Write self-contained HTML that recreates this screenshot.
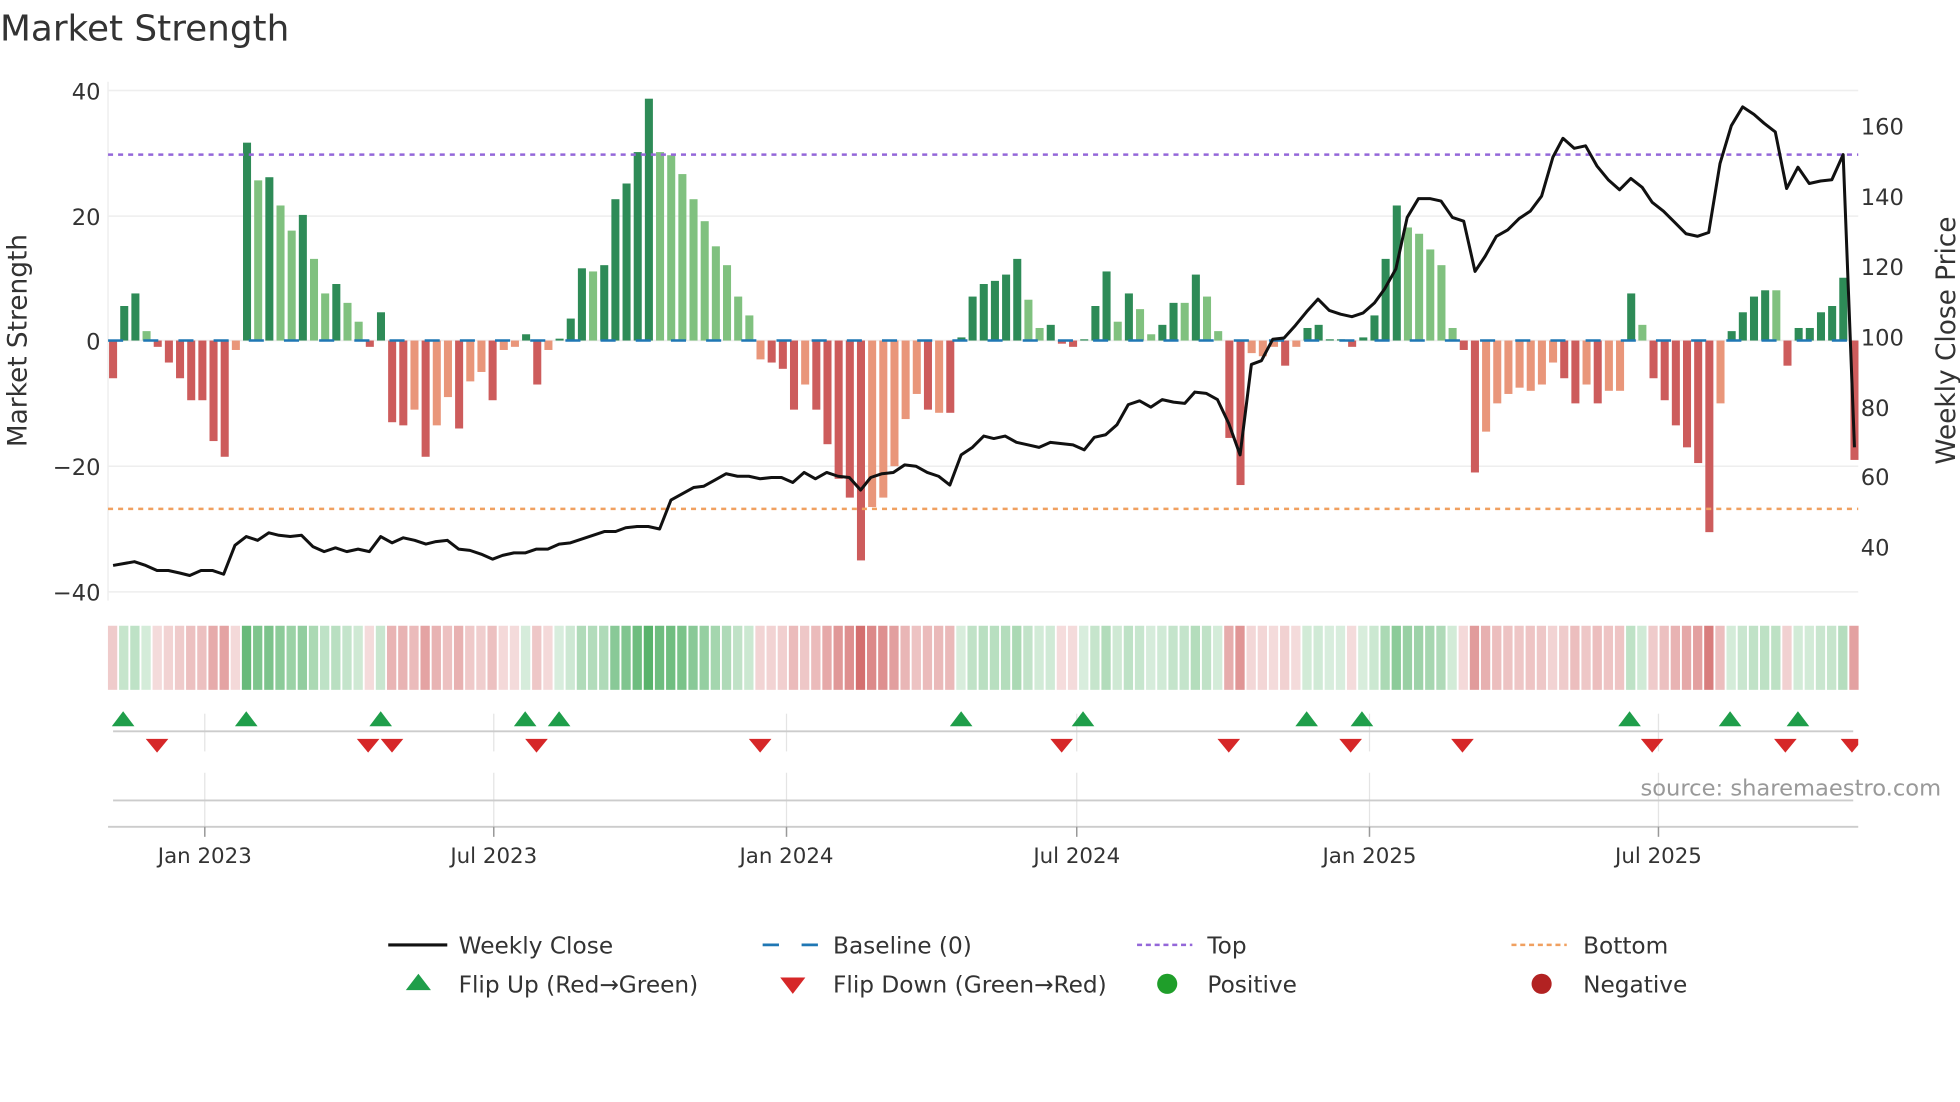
<!DOCTYPE html>
<html><head><meta charset="utf-8"><style>
html,body{margin:0;padding:0;background:#fff;width:1960px;height:1102px;overflow:hidden}
svg{display:block;font-family:"DejaVu Sans","Liberation Sans",sans-serif}
</style></head><body>
<svg id="s" width="1960" height="1102" viewBox="0 0 1560 877" xmlns="http://www.w3.org/2000/svg">
<text x="0" y="32" font-size="28.5" fill="#333">Market Strength</text>
<g stroke="#eeeeee" stroke-width="1.2">
<line x1="86" y1="72" x2="1479" y2="72"/><line x1="86" y1="172" x2="1479" y2="172"/><line x1="86" y1="271" x2="1479" y2="271"/><line x1="86" y1="371" x2="1479" y2="371"/><line x1="86" y1="471" x2="1479" y2="471"/>
<line x1="86" y1="65" x2="86" y2="478"/>
</g>
<g font-size="18" fill="#333" text-anchor="end">
<text x="80" y="79">40</text><text x="80" y="179">20</text><text x="80" y="278">0</text><text x="80" y="378">−20</text><text x="80" y="478">−40</text>
</g>
<g font-size="18" fill="#333">
<text x="1481" y="107">160</text><text x="1481" y="163">140</text><text x="1481" y="219">120</text><text x="1481" y="275">100</text><text x="1481" y="331">80</text><text x="1481" y="386">60</text><text x="1481" y="442">40</text>
</g>
<text transform="translate(21,271) rotate(-90)" font-size="21" fill="#333" text-anchor="middle">Market Strength</text>
<text transform="translate(1556,271) rotate(-90)" font-size="21" fill="#333" text-anchor="middle">Weekly Close Price</text>
<g id="bars"></g>
<line x1="86" y1="271" x2="1479" y2="271" stroke="#1f77b4" stroke-width="2" stroke-dasharray="12,16"/>
<line x1="86" y1="123" x2="1479" y2="123" stroke="#9467d9" stroke-width="2" stroke-dasharray="4,4"/>
<line x1="86" y1="405" x2="1479" y2="405" stroke="#f0a060" stroke-width="2" stroke-dasharray="4,4"/>
<polyline id="price" fill="none" stroke="#111" stroke-width="2.4" stroke-linejoin="round"/>
<g id="heat"></g>
<g stroke="#e4e4e4" stroke-width="1">
<line x1="163" y1="568" x2="163" y2="598"/><line x1="393" y1="568" x2="393" y2="598"/><line x1="626" y1="568" x2="626" y2="598"/><line x1="857" y1="568" x2="857" y2="598"/><line x1="1090" y1="568" x2="1090" y2="598"/><line x1="1320" y1="568" x2="1320" y2="598"/>
<line x1="163" y1="615" x2="163" y2="658"/><line x1="393" y1="615" x2="393" y2="658"/><line x1="626" y1="615" x2="626" y2="658"/><line x1="857" y1="615" x2="857" y2="658"/><line x1="1090" y1="615" x2="1090" y2="658"/><line x1="1320" y1="615" x2="1320" y2="658"/>
</g>
<line x1="90" y1="582" x2="1475" y2="582" stroke="#cccccc" stroke-width="1.5"/>
<line x1="90" y1="637" x2="1475" y2="637" stroke="#cccccc" stroke-width="1.5"/>
<line x1="86" y1="658" x2="1479" y2="658" stroke="#cccccc" stroke-width="1.5"/>
<g stroke="#999" stroke-width="1.2">
<line x1="163" y1="658" x2="163" y2="666"/><line x1="393" y1="658" x2="393" y2="666"/><line x1="626" y1="658" x2="626" y2="666"/><line x1="857" y1="658" x2="857" y2="666"/><line x1="1090" y1="658" x2="1090" y2="666"/><line x1="1320" y1="658" x2="1320" y2="666"/>
</g>
<g id="mk"></g>
<text x="1545" y="633" font-size="18" fill="#999" text-anchor="end">source: sharemaestro.com</text>
<g font-size="17" fill="#333" text-anchor="middle">
<text x="163" y="687">Jan 2023</text><text x="393" y="687">Jul 2023</text><text x="626" y="687">Jan 2024</text><text x="857" y="687">Jul 2024</text><text x="1090" y="687">Jan 2025</text><text x="1320" y="687">Jul 2025</text>
</g>
<g font-size="18.5" fill="#333">
<line x1="309" y1="752" x2="356" y2="752" stroke="#111" stroke-width="2.5"/><text x="365" y="759">Weekly Close</text>
<line x1="607" y1="752" x2="651" y2="752" stroke="#1f77b4" stroke-width="2.2" stroke-dasharray="13,18"/><text x="663" y="759">Baseline (0)</text>
<line x1="905" y1="752" x2="949" y2="752" stroke="#9467d9" stroke-width="2" stroke-dasharray="4,3"/><text x="961" y="759">Top</text>
<line x1="1203" y1="752" x2="1247" y2="752" stroke="#f0a060" stroke-width="2" stroke-dasharray="4,3"/><text x="1260" y="759">Bottom</text>
<polygon points="323,788 343,788 333,775" fill="#1f9e4a"/><text x="365" y="790">Flip Up (Red→Green)</text>
<polygon points="621,778 641,778 631,791" fill="#d62728"/><text x="663" y="790">Flip Down (Green→Red)</text>
<circle cx="929" cy="783" r="8" fill="#1f9e2a"/><text x="961" y="790">Positive</text>
<circle cx="1227" cy="783" r="8" fill="#b22222"/><text x="1260" y="790">Negative</text>
</g>
</svg>
<script>
var V=[[-6,1],[5.5,1],[7.5,1],[1.5,0],[-1,1],[-3.5,1],[-6,1],[-9.5,1],[-9.5,1],[-16,1],[-18.5,1],[-1.5,0],[31.5,1],[25.5,0],[26,1],[21.5,0],[17.5,0],[20,1],[13,0],[7.5,0],[9,1],[6,0],[3,0],[-1,1],[4.5,1],[-13,1],[-13.5,1],[-11,0],[-18.5,1],[-13.5,0],[-9,0],[-14,1],[-6.5,0],[-5,0],[-9.5,1],[-1.5,0],[-1,0],[1,1],[-7,1],[-1.5,0],[0.3,1],[3.5,1],[11.5,1],[11,0],[12,1],[22.5,1],[25,1],[30,1],[38.5,1],[30,0],[29.5,0],[26.5,0],[22.5,0],[19,0],[15,0],[12,0],[7,0],[4,0],[-3,0],[-3.5,1],[-4.5,1],[-11,1],[-7,0],[-11,1],[-16.5,1],[-22,1],[-25,1],[-35,1],[-26.5,0],[-25,0],[-20,0],[-12.5,0],[-8.5,0],[-11,1],[-11.5,0],[-11.5,1],[0.5,1],[7,1],[9,1],[9.5,1],[10.5,1],[13,1],[6.5,0],[2,0],[2.5,1],[-0.5,1],[-1,1],[0.2,1],[5.5,1],[11,1],[3,0],[7.5,1],[5,0],[1,0],[2.5,1],[6,1],[6,0],[10.5,1],[7,0],[1.5,0],[-15.5,1],[-23,1],[-2,0],[-2.5,0],[-1,0],[-4,1],[-1,0],[2,1],[2.5,1],[0.2,1],[0.2,1],[-1,1],[0.5,1],[4,1],[13,1],[21.5,1],[18,0],[17,0],[14.5,0],[12,0],[2,0],[-1.5,1],[-21,1],[-14.5,0],[-10,0],[-8.5,0],[-7.5,0],[-8,0],[-7,0],[-3.5,0],[-6,1],[-10,1],[-7,0],[-10,1],[-8,0],[-8,0],[7.5,1],[2.5,0],[-6,1],[-9.5,1],[-13.5,1],[-17,1],[-19.5,1],[-30.5,1],[-10,0],[1.5,1],[4.5,1],[7,1],[8,1],[8,0],[-4,1],[2,1],[2,1],[4.5,1],[5.5,1],[10,1],[-19,1]];
var ns="http://www.w3.org/2000/svg",B=document.getElementById("bars"),H=document.getElementById("heat");
function el(t,a,p){var e=document.createElementNS(ns,t);for(var k in a)e.setAttribute(k,a[k]);p.appendChild(e);return e;}
var step=(1476-90)/(V.length-1);
for(var i=0;i<V.length;i++){var v=V[i][0],d=V[i][1],x=90+i*step,h=Math.abs(v)*5;
var c=v>=0?(d?"#2e8b57":"#80c17f"):(d?"#cd5c5c":"#e9967a");
if(h>0.5)el("rect",{x:x-3.2,y:v>=0?271-h:271,width:6.4,height:h,fill:c},B);
var a=Math.min(0.18+0.6*Math.abs(v)/35,0.8);
var hc=v>=0?"rgba(46,160,70,"+a+")":"rgba(200,70,70,"+a+")";
el("rect",{x:x-4.1,y:498,width:7.4,height:51,fill:hc},H);}
var P=[[90,450],[107,447],[116,450],[125,454],[134,454],[143,456],[151,458],[160,454],[169,454],[178,457],[187,434],[196,427],[205,430],[214,424],[222,426],[231,427],[240,426],[249,435],[258,439],[267,436],[276,439],[285,437],[294,439],[303,427],[312,432],[321,428],[330,430],[339,433],[347,431],[356,430],[365,437],[374,438],[383,441],[392,445],[400,442],[409,440],[418,440],[427,437],[436,437],[445,433],[454,432],[463,429],[472,426],[481,423],[490,423],[498,420],[507,419],[516,419],[525,421],[534,398],[543,393],[552,388],[560,387],[569,382],[578,377],[587,379],[596,379],[605,381],[614,380],[622,380],[631,384],[640,376],[649,381],[658,376],[667,379],[676,380],[685,390],[693,380],[702,377],[711,376],[720,370],[729,371],[738,376],[747,379],[756,386],[765,362],[774,356],[783,347],[791,349],[800,347],[809,352],[818,354],[827,356],[836,352],[845,353],[854,354],[863,358],[871,348],[880,346],[889,338],[898,322],[907,319],[916,324],[925,318],[934,320],[943,321],[951,312],[960,313],[969,318],[978,337],[987,362],[996,290],[1004,287],[1013,270],[1022,269],[1031,259],[1040,248],[1049,238],[1058,247],[1067,250],[1076,252],[1085,249],[1094,241],[1102,230],[1111,214],[1120,173],[1129,158],[1138,158],[1147,160],[1156,173],[1165,176],[1174,216],[1182,204],[1191,188],[1200,183],[1209,174],[1218,168],[1227,156],[1236,125],[1244,110],[1253,118],[1262,116],[1271,132],[1280,143],[1289,151],[1298,142],[1307,149],[1315,161],[1324,168],[1333,177],[1342,186],[1351,188],[1360,185],[1369,130],[1378,100],[1387,85],[1396,91],[1404,98],[1413,105],[1422,150],[1431,133],[1440,146],[1449,144],[1458,143],[1467,123],[1476,356]];
document.getElementById("price").setAttribute("points",P.map(function(p){return p.join(",")}).join(" "));
var M=document.getElementById("mk");
[98,196,303,418,445,765,862,1040,1084,1297,1377,1431].forEach(function(x){el("polygon",{points:(x-9)+",578 "+(x+9)+",578 "+x+",566",fill:"#1f9e4a"},M);});
[125,293,312,427,605,845,978,1075,1164,1315,1421,1474].forEach(function(x){el("polygon",{points:(x-9)+",588 "+(x+9)+",588 "+x+",599",fill:"#d62728"},M);});
el("rect",{x:1479,y:584,width:10,height:18,fill:"#fff"},M);
</script>
</body></html>
